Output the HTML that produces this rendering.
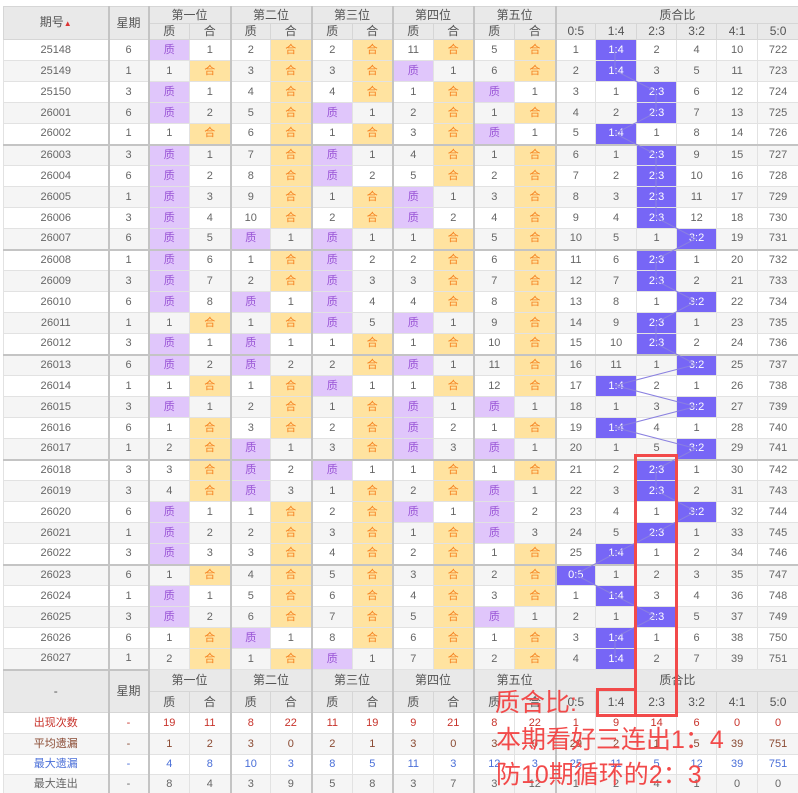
<!DOCTYPE html>
<html><head><meta charset="utf-8">
<style>
html,body{margin:0;padding:0;background:#fff;width:798px;height:793px;overflow:hidden;position:relative}
table{position:absolute;left:3px;top:6px;border-collapse:collapse;table-layout:fixed;width:795px;font-family:"Liberation Sans","Noto Sans CJK SC",sans-serif;font-size:11px;color:#666}
td,th{border:1px solid #e2e2e2;text-align:center;padding:0;overflow:hidden;white-space:nowrap;font-weight:normal;line-height:13px}
th{background:#e9e9e9;color:#555;font-size:12px;border-color:#d6d6d6}
thead tr.a{height:17px}thead tr.b{height:16px}
tbody tr{height:21px}
tbody tr:nth-child(even){background:#f5f5f5}
tbody tr.g td{border-top:2px solid #c4c4c4}
td:nth-child(2),td:nth-child(3),td:nth-child(5),td:nth-child(7),td:nth-child(9),td:nth-child(11),td:nth-child(13){border-left:2px solid #c4c4c4}
th.L{border-left:2px solid #c4c4c4}
.z{background:#e0c6fb;color:#9a55d6}
.h{background:#ffe3a0;color:#f5821f}
.b{background:#7766f6;color:#fff}
tr.mh{height:22px}tr.mh2{height:21px}
tr.s1 td{color:#c8332b}tr.s2 td{color:#8a4a32}tr.s3 td{color:#4a6fd8}tr.s4 td{color:#666}
tr.s1,tr.s2{height:21px}tr.s3,tr.s4{height:20px}
tfoot tr:nth-child(4),tfoot tr:nth-child(6){background:#f5f5f5}
.box{position:absolute;border:3px solid #f24a4a;box-sizing:border-box}
.t{position:absolute;color:#f24a4a;font-family:"Liberation Sans","Noto Sans CJK SC",sans-serif;font-size:25px;line-height:30px;white-space:nowrap}
svg{position:absolute;left:0;top:0}
</style></head><body>
<table>
<colgroup><col style="width:105px"><col style="width:40px"><col style="width:41px"><col style="width:41px"><col style="width:40px"><col style="width:41px"><col style="width:41px"><col style="width:40px"><col style="width:41px"><col style="width:40px"><col style="width:41px"><col style="width:41px"><col style="width:40px"><col style="width:41px"><col style="width:40px"><col style="width:40px"><col style="width:41px"><col style="width:41px"></colgroup>
<thead>
<tr class="a"><th rowspan="2">期号<span style="color:#d33;font-size:8px">▲</span></th><th rowspan="2" class="L">星期</th><th colspan="2" class="L">第一位</th><th colspan="2" class="L">第二位</th><th colspan="2" class="L">第三位</th><th colspan="2" class="L">第四位</th><th colspan="2" class="L">第五位</th><th colspan="6" class="L">质合比</th></tr>
<tr class="b"><th class="L">质</th><th>合</th><th class="L">质</th><th>合</th><th class="L">质</th><th>合</th><th class="L">质</th><th>合</th><th class="L">质</th><th>合</th><th class="L">0:5</th><th>1:4</th><th>2:3</th><th>3:2</th><th>4:1</th><th>5:0</th></tr>
</thead>
<tbody>
<tr><td>25148</td><td>6</td><td class="z">质</td><td>1</td><td>2</td><td class="h">合</td><td>2</td><td class="h">合</td><td>11</td><td class="h">合</td><td>5</td><td class="h">合</td><td>1</td><td class="b">1:4</td><td>2</td><td>4</td><td>10</td><td>722</td></tr>
<tr><td>25149</td><td>1</td><td>1</td><td class="h">合</td><td>3</td><td class="h">合</td><td>3</td><td class="h">合</td><td class="z">质</td><td>1</td><td>6</td><td class="h">合</td><td>2</td><td class="b">1:4</td><td>3</td><td>5</td><td>11</td><td>723</td></tr>
<tr><td>25150</td><td>3</td><td class="z">质</td><td>1</td><td>4</td><td class="h">合</td><td>4</td><td class="h">合</td><td>1</td><td class="h">合</td><td class="z">质</td><td>1</td><td>3</td><td>1</td><td class="b">2:3</td><td>6</td><td>12</td><td>724</td></tr>
<tr><td>26001</td><td>6</td><td class="z">质</td><td>2</td><td>5</td><td class="h">合</td><td class="z">质</td><td>1</td><td>2</td><td class="h">合</td><td>1</td><td class="h">合</td><td>4</td><td>2</td><td class="b">2:3</td><td>7</td><td>13</td><td>725</td></tr>
<tr><td>26002</td><td>1</td><td>1</td><td class="h">合</td><td>6</td><td class="h">合</td><td>1</td><td class="h">合</td><td>3</td><td class="h">合</td><td class="z">质</td><td>1</td><td>5</td><td class="b">1:4</td><td>1</td><td>8</td><td>14</td><td>726</td></tr>
<tr class="g"><td>26003</td><td>3</td><td class="z">质</td><td>1</td><td>7</td><td class="h">合</td><td class="z">质</td><td>1</td><td>4</td><td class="h">合</td><td>1</td><td class="h">合</td><td>6</td><td>1</td><td class="b">2:3</td><td>9</td><td>15</td><td>727</td></tr>
<tr><td>26004</td><td>6</td><td class="z">质</td><td>2</td><td>8</td><td class="h">合</td><td class="z">质</td><td>2</td><td>5</td><td class="h">合</td><td>2</td><td class="h">合</td><td>7</td><td>2</td><td class="b">2:3</td><td>10</td><td>16</td><td>728</td></tr>
<tr><td>26005</td><td>1</td><td class="z">质</td><td>3</td><td>9</td><td class="h">合</td><td>1</td><td class="h">合</td><td class="z">质</td><td>1</td><td>3</td><td class="h">合</td><td>8</td><td>3</td><td class="b">2:3</td><td>11</td><td>17</td><td>729</td></tr>
<tr><td>26006</td><td>3</td><td class="z">质</td><td>4</td><td>10</td><td class="h">合</td><td>2</td><td class="h">合</td><td class="z">质</td><td>2</td><td>4</td><td class="h">合</td><td>9</td><td>4</td><td class="b">2:3</td><td>12</td><td>18</td><td>730</td></tr>
<tr><td>26007</td><td>6</td><td class="z">质</td><td>5</td><td class="z">质</td><td>1</td><td class="z">质</td><td>1</td><td>1</td><td class="h">合</td><td>5</td><td class="h">合</td><td>10</td><td>5</td><td>1</td><td class="b">3:2</td><td>19</td><td>731</td></tr>
<tr class="g"><td>26008</td><td>1</td><td class="z">质</td><td>6</td><td>1</td><td class="h">合</td><td class="z">质</td><td>2</td><td>2</td><td class="h">合</td><td>6</td><td class="h">合</td><td>11</td><td>6</td><td class="b">2:3</td><td>1</td><td>20</td><td>732</td></tr>
<tr><td>26009</td><td>3</td><td class="z">质</td><td>7</td><td>2</td><td class="h">合</td><td class="z">质</td><td>3</td><td>3</td><td class="h">合</td><td>7</td><td class="h">合</td><td>12</td><td>7</td><td class="b">2:3</td><td>2</td><td>21</td><td>733</td></tr>
<tr><td>26010</td><td>6</td><td class="z">质</td><td>8</td><td class="z">质</td><td>1</td><td class="z">质</td><td>4</td><td>4</td><td class="h">合</td><td>8</td><td class="h">合</td><td>13</td><td>8</td><td>1</td><td class="b">3:2</td><td>22</td><td>734</td></tr>
<tr><td>26011</td><td>1</td><td>1</td><td class="h">合</td><td>1</td><td class="h">合</td><td class="z">质</td><td>5</td><td class="z">质</td><td>1</td><td>9</td><td class="h">合</td><td>14</td><td>9</td><td class="b">2:3</td><td>1</td><td>23</td><td>735</td></tr>
<tr><td>26012</td><td>3</td><td class="z">质</td><td>1</td><td class="z">质</td><td>1</td><td>1</td><td class="h">合</td><td>1</td><td class="h">合</td><td>10</td><td class="h">合</td><td>15</td><td>10</td><td class="b">2:3</td><td>2</td><td>24</td><td>736</td></tr>
<tr class="g"><td>26013</td><td>6</td><td class="z">质</td><td>2</td><td class="z">质</td><td>2</td><td>2</td><td class="h">合</td><td class="z">质</td><td>1</td><td>11</td><td class="h">合</td><td>16</td><td>11</td><td>1</td><td class="b">3:2</td><td>25</td><td>737</td></tr>
<tr><td>26014</td><td>1</td><td>1</td><td class="h">合</td><td>1</td><td class="h">合</td><td class="z">质</td><td>1</td><td>1</td><td class="h">合</td><td>12</td><td class="h">合</td><td>17</td><td class="b">1:4</td><td>2</td><td>1</td><td>26</td><td>738</td></tr>
<tr><td>26015</td><td>3</td><td class="z">质</td><td>1</td><td>2</td><td class="h">合</td><td>1</td><td class="h">合</td><td class="z">质</td><td>1</td><td class="z">质</td><td>1</td><td>18</td><td>1</td><td>3</td><td class="b">3:2</td><td>27</td><td>739</td></tr>
<tr><td>26016</td><td>6</td><td>1</td><td class="h">合</td><td>3</td><td class="h">合</td><td>2</td><td class="h">合</td><td class="z">质</td><td>2</td><td>1</td><td class="h">合</td><td>19</td><td class="b">1:4</td><td>4</td><td>1</td><td>28</td><td>740</td></tr>
<tr><td>26017</td><td>1</td><td>2</td><td class="h">合</td><td class="z">质</td><td>1</td><td>3</td><td class="h">合</td><td class="z">质</td><td>3</td><td class="z">质</td><td>1</td><td>20</td><td>1</td><td>5</td><td class="b">3:2</td><td>29</td><td>741</td></tr>
<tr class="g"><td>26018</td><td>3</td><td>3</td><td class="h">合</td><td class="z">质</td><td>2</td><td class="z">质</td><td>1</td><td>1</td><td class="h">合</td><td>1</td><td class="h">合</td><td>21</td><td>2</td><td class="b">2:3</td><td>1</td><td>30</td><td>742</td></tr>
<tr><td>26019</td><td>3</td><td>4</td><td class="h">合</td><td class="z">质</td><td>3</td><td>1</td><td class="h">合</td><td>2</td><td class="h">合</td><td class="z">质</td><td>1</td><td>22</td><td>3</td><td class="b">2:3</td><td>2</td><td>31</td><td>743</td></tr>
<tr><td>26020</td><td>6</td><td class="z">质</td><td>1</td><td>1</td><td class="h">合</td><td>2</td><td class="h">合</td><td class="z">质</td><td>1</td><td class="z">质</td><td>2</td><td>23</td><td>4</td><td>1</td><td class="b">3:2</td><td>32</td><td>744</td></tr>
<tr><td>26021</td><td>1</td><td class="z">质</td><td>2</td><td>2</td><td class="h">合</td><td>3</td><td class="h">合</td><td>1</td><td class="h">合</td><td class="z">质</td><td>3</td><td>24</td><td>5</td><td class="b">2:3</td><td>1</td><td>33</td><td>745</td></tr>
<tr><td>26022</td><td>3</td><td class="z">质</td><td>3</td><td>3</td><td class="h">合</td><td>4</td><td class="h">合</td><td>2</td><td class="h">合</td><td>1</td><td class="h">合</td><td>25</td><td class="b">1:4</td><td>1</td><td>2</td><td>34</td><td>746</td></tr>
<tr class="g"><td>26023</td><td>6</td><td>1</td><td class="h">合</td><td>4</td><td class="h">合</td><td>5</td><td class="h">合</td><td>3</td><td class="h">合</td><td>2</td><td class="h">合</td><td class="b">0:5</td><td>1</td><td>2</td><td>3</td><td>35</td><td>747</td></tr>
<tr><td>26024</td><td>1</td><td class="z">质</td><td>1</td><td>5</td><td class="h">合</td><td>6</td><td class="h">合</td><td>4</td><td class="h">合</td><td>3</td><td class="h">合</td><td>1</td><td class="b">1:4</td><td>3</td><td>4</td><td>36</td><td>748</td></tr>
<tr><td>26025</td><td>3</td><td class="z">质</td><td>2</td><td>6</td><td class="h">合</td><td>7</td><td class="h">合</td><td>5</td><td class="h">合</td><td class="z">质</td><td>1</td><td>2</td><td>1</td><td class="b">2:3</td><td>5</td><td>37</td><td>749</td></tr>
<tr><td>26026</td><td>6</td><td>1</td><td class="h">合</td><td class="z">质</td><td>1</td><td>8</td><td class="h">合</td><td>6</td><td class="h">合</td><td>1</td><td class="h">合</td><td>3</td><td class="b">1:4</td><td>1</td><td>6</td><td>38</td><td>750</td></tr>
<tr><td>26027</td><td>1</td><td>2</td><td class="h">合</td><td>1</td><td class="h">合</td><td class="z">质</td><td>1</td><td>7</td><td class="h">合</td><td>2</td><td class="h">合</td><td>4</td><td class="b">1:4</td><td>2</td><td>7</td><td>39</td><td>751</td></tr>
</tbody>
<tfoot>
<tr class="mh"><th rowspan="2" style="border-top:2px solid #c4c4c4">-</th><th rowspan="2" class="L" style="border-top:2px solid #c4c4c4">星期</th><th colspan="2" class="L">第一位</th><th colspan="2" class="L">第二位</th><th colspan="2" class="L">第三位</th><th colspan="2" class="L">第四位</th><th colspan="2" class="L">第五位</th><th colspan="6" class="L">质合比</th></tr>
<tr class="mh2"><th class="L">质</th><th>合</th><th class="L">质</th><th>合</th><th class="L">质</th><th>合</th><th class="L">质</th><th>合</th><th class="L">质</th><th>合</th><th class="L">0:5</th><th>1:4</th><th>2:3</th><th>3:2</th><th>4:1</th><th>5:0</th></tr>
<tr class="s1"><td>出现次数</td><td>-</td><td>19</td><td>11</td><td>8</td><td>22</td><td>11</td><td>19</td><td>9</td><td>21</td><td>8</td><td>22</td><td>1</td><td>9</td><td>14</td><td>6</td><td>0</td><td>0</td></tr>
<tr class="s2"><td>平均遗漏</td><td>-</td><td>1</td><td>2</td><td>3</td><td>0</td><td>2</td><td>1</td><td>3</td><td>0</td><td>3</td><td>0</td><td>29</td><td>2</td><td>1</td><td>5</td><td>39</td><td>751</td></tr>
<tr class="s3"><td>最大遗漏</td><td>-</td><td>4</td><td>8</td><td>10</td><td>3</td><td>8</td><td>5</td><td>11</td><td>3</td><td>12</td><td>3</td><td>25</td><td>11</td><td>5</td><td>12</td><td>39</td><td>751</td></tr>
<tr class="s4"><td>最大连出</td><td>-</td><td>8</td><td>4</td><td>3</td><td>9</td><td>5</td><td>8</td><td>3</td><td>7</td><td>3</td><td>12</td><td>1</td><td>2</td><td>4</td><td>1</td><td>0</td><td>0</td></tr>
</tfoot>
</table>
<svg width="798" height="793"><polyline fill="none" stroke="#8a80e0" stroke-width="1" points="615,49.5 615,70.5 656,91.5 656,112.5 615,133.5 656,154.5 656,175.5 656,196.5 656,217.5 696,238.5 656,259.5 656,280.5 696,301.5 656,322.5 656,343.5 696,364.5 615,385.5 696,406.5 615,427.5 696,448.5 656,469.5 656,490.5 696,511.5 656,532.5 615,553.5 575,574.5 615,595.5 656,616.5 615,637.5 615,658.5"/></svg>
<div class="box" style="left:634px;top:454px;width:44px;height:263px"></div>
<div class="box" style="left:596px;top:688px;width:41px;height:29px"></div>
<div class="t" style="left:495px;top:688px">质合比:</div>
<div class="t" style="left:496px;top:725px">本期看好三连出1：4</div>
<div class="t" style="left:496px;top:760px">防10期循环的2：3</div>
</body></html>
